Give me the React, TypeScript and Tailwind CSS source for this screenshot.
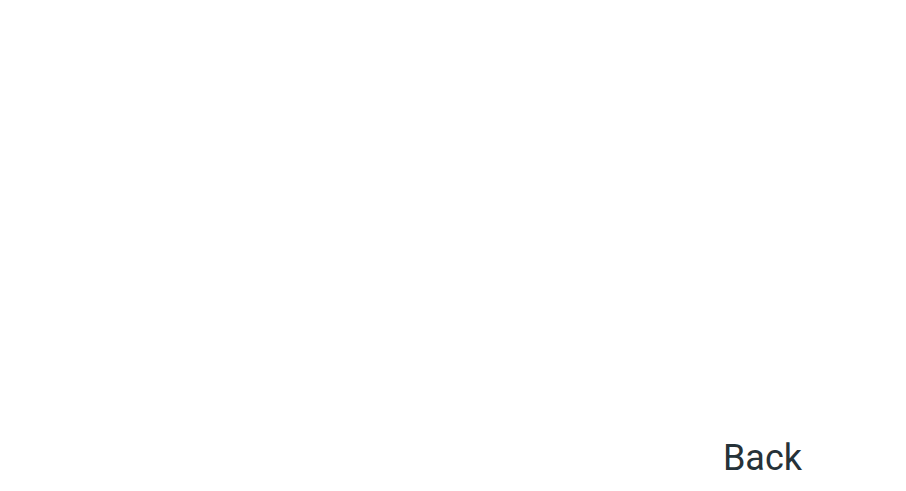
import React from 'react';

const App: React.FC = () => {
  return (
    <div className="h-screen w-full bg-white flex flex-col justify-end items-end pr-[104px] pb-[12px]">
      <button
        type="button"
        className="text-[36px] leading-[42px] text-[#263238] font-['Roboto',sans-serif]"
      >
        Back
      </button>
    </div>
  );
};

export default App;
